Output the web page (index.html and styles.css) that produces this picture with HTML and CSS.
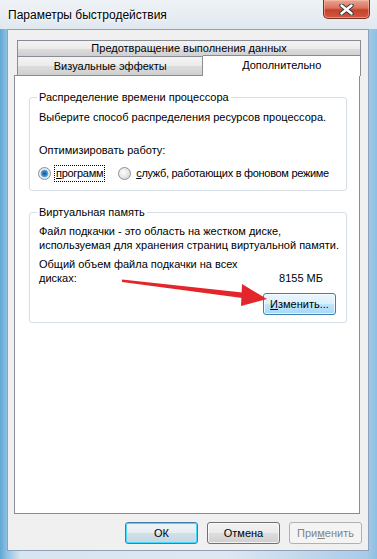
FILE: index.html
```html
<!DOCTYPE html>
<html lang="ru">
<head>
    <meta charset="UTF-8">
    <title>Параметры быстродействия</title>
    <link rel="stylesheet" href="styles.css">
</head>
<body>
    <div class="window">
        <div class="titlebar">
            <span class="title">Параметры быстродействия</span>
            <span class="close">
                <svg width="15" height="11" viewBox="0 0 15 11">
                    <path d="M2.5 1.5 L12.5 9.5 M12.5 1.5 L2.5 9.5" stroke="#3a3a3a" stroke-width="4.4" stroke-linecap="round"/>
                    <path d="M2.5 1.5 L12.5 9.5 M12.5 1.5 L2.5 9.5" stroke="#fff" stroke-width="2.4" stroke-linecap="round"/>
                </svg>
            </span>
        </div>
        <div class="client">
            <div class="tabs">
                <div class="tab-row back">
                    <div class="tab dep">Предотвращение выполнения данных</div>
                </div>
                <div class="tab-row front">
                    <div class="tab visual">Визуальные эффекты</div>
                    <div class="tab active">Дополнительно</div>
                </div>
            </div>
            <div class="panel">
                <fieldset class="group cpu">
                    <legend>Распределение времени процессора</legend>
                    <p>Выберите способ распределения ресурсов процессора.</p>
                    <p class="optimize">Оптимизировать работу:</p>
                    <div class="radios">
                        <label class="radio checked"><span class="dot"></span><span class="caption focus"><u>п</u>рограмм</span></label>
                        <label class="radio"><span class="dot"></span><span class="caption"><u>с</u>лужб, работающих в фоновом режиме</span></label>
                    </div>
                </fieldset>
                <fieldset class="group memory">
                    <legend>Виртуальная память</legend>
                    <p>Файл подкачки - это область на жестком диске,<br>используемая для хранения страниц виртуальной памяти.</p>
                    <div class="total">
                        <span>Общий объем файла подкачки на всех<br>дисках:</span>
                        <span class="size">8155 МБ</span>
                    </div>
                    <div class="change-row">
                        <button class="btn hot"><u>И</u>зменить...</button>
                    </div>
                </fieldset>
            </div>
            <div class="buttons">
                <button class="btn default">ОК</button>
                <button class="btn">Отмена</button>
                <button class="btn" disabled>При<u>м</u>енить</button>
            </div>
        </div>

        <!-- red arrow drawn over the dialog -->
        <svg class="arrow" width="377" height="559" viewBox="0 0 377 559">
            <polygon points="122,279.5 247,293 246,298.5 122,282" fill="#e3262c"/>
            <polygon points="242,284 267,299 241,306" fill="#e3262c"/>
        </svg>
    </div>
</body>
</html>
```

FILE: styles.css
```css
body {
    margin: 0;
    padding: 0;
    font-family: "Liberation Sans", Arial, sans-serif;
    font-size: 11px;
    color: #000;
    background: #fff;
}
.window {
    position: relative;
    width: 377px;
    height: 559px;
    box-sizing: border-box;
    display: flex;
    flex-direction: column;
    background: linear-gradient(90deg, #5fa7d4 0, #8fc2e4 7px, #d8e4ef 20px, #dfe8f1 60%, #a9cbe8 97%, #8fbfe3 100%);
    overflow: hidden;
    white-space: nowrap;
}
.titlebar {
    height: 29px;
    display: flex;
    align-items: flex-start;
    justify-content: space-between;
    background: linear-gradient(180deg, #eef2f6 0, #e0e8f0 100%);
}
.title {
    margin: 7px 0 0 8px;
    font-size: 12px;
    line-height: 16px;
    text-shadow: 0 0 6px #fff, 0 0 3px #fff;
}
.close {
    width: 47px;
    height: 19px;
    margin-right: 7px;
    box-sizing: border-box;
    display: flex;
    align-items: center;
    justify-content: center;
    border: 1px solid #7a3027;
    border-top: none;
    border-radius: 0 0 5px 5px;
    background: linear-gradient(180deg, #e9a795 0, #d9725d 45%, #c7412b 55%, #cf5a40 100%);
    box-shadow: inset 0 0 0 1px rgba(255, 200, 180, 0.5);
}
.client {
    flex: 1;
    margin: 0 8px 8px 7px;
    background-color: #f0f0f0;
    border: 1px solid #8da2b6;
    display: flex;
    flex-direction: column;
}
.tabs {
    margin: 10px 7px 0 9px;
}
.tab-row {
    display: flex;
}
.tab {
    box-sizing: border-box;
    border: 1px solid #898c95;
    border-bottom: none;
    background: linear-gradient(180deg, #f3f3f3 0, #ebebeb 50%, #dddddd 51%, #cfcfcf 100%);
    text-align: center;
    line-height: 15px;
}
.tab.dep {
    width: 345px;
    height: 16px;
}
.tab.visual {
    width: 187px;
    height: 19px;
    padding-top: 2px;
}
.tab.active {
    width: 158px;
    height: 21px;
    margin-top: -1px;
    margin-bottom: -1px;
    border-left: none;
    background: #fff;
    position: relative;
    z-index: 1;
    padding-top: 2px;
}
.panel {
    margin: 0 8px 0 6px;
    height: 439px;
    box-sizing: border-box;
    background: #fff;
    border: 1px solid #898c95;
    padding-top: 13px;
}
.group {
    min-width: 0;
    margin: 0 12px 0 14px;
    padding: 0 10px 0 9px;
    border: 1px solid #d5dfe5;
    border-radius: 3px;
    line-height: 14px;
}
.group legend {
    padding: 0 2px;
    margin-left: -2px;
    line-height: 16px;
}
.group p {
    margin: 0;
}
.cpu {
    height: 102px;
    box-sizing: border-box;
    padding-top: 5px;
}
.cpu .optimize {
    margin-top: 19px;
}
.radios {
    display: flex;
    gap: 13px;
    margin-top: 8px;
    margin-left: -1px;
}
.radio {
    display: flex;
    align-items: center;
    gap: 3px;
}
.dot {
    width: 13px;
    height: 13px;
    box-sizing: border-box;
    border-radius: 50%;
    border: 1px solid #8e8f8f;
    background: radial-gradient(circle at 40% 40%, #fdfdfd 0, #e2e2e2 60%, #cdcdcd 100%);
}
.radio.checked .dot {
    background: radial-gradient(circle, #1a5a93 0, #2d7ac2 2px, #69a7e0 3.5px, #e9eef3 4.2px, #dfe3e8 100%);
}
.caption {
    padding: 0 1px;
    line-height: 15px;
    letter-spacing: -0.3px;
    border: 1px solid transparent;
}
.caption.focus {
    border: 1px dotted #000;
}
.memory {
    margin-top: 13px;
    height: 119px;
    box-sizing: border-box;
    padding-top: 4px;
}
.total {
    margin-top: 5px;
    display: flex;
    justify-content: space-between;
    align-items: flex-end;
    padding-right: 13px;
}
.change-row {
    display: flex;
    justify-content: flex-end;
    margin-top: 8px;
}
.btn {
    box-sizing: border-box;
    width: 73px;
    height: 22px;
    padding: 0;
    font-family: inherit;
    font-size: 11px;
    color: #000;
    border: 1px solid #707070;
    border-radius: 3px;
    background: linear-gradient(180deg, #f2f2f2 0, #ebebeb 50%, #dddddd 51%, #cfcfcf 100%);
    box-shadow: inset 0 0 0 1px rgba(255, 255, 255, 0.7);
}
.btn.hot,
.btn.default {
    border-color: #3c7fb1;
    background: linear-gradient(180deg, #eaf6fd 0, #d9f0fc 50%, #bee6fd 51%, #a7d9f5 100%);
}
.btn.default {
    background: linear-gradient(180deg, #f0f4f7 0, #e6edf2 50%, #d2dfe8 51%, #c6d6e2 100%);
    box-shadow: inset 0 0 0 1px #48d8fb;
}
.btn:disabled {
    color: #838383;
    border-color: #adb2b5;
    background: #f4f4f4;
    box-shadow: none;
}
.buttons {
    display: flex;
    justify-content: flex-end;
    gap: 9px;
    margin: 8px 6px 0 0;
}
.arrow {
    position: absolute;
    top: 0;
    left: 0;
    pointer-events: none;
}
```
